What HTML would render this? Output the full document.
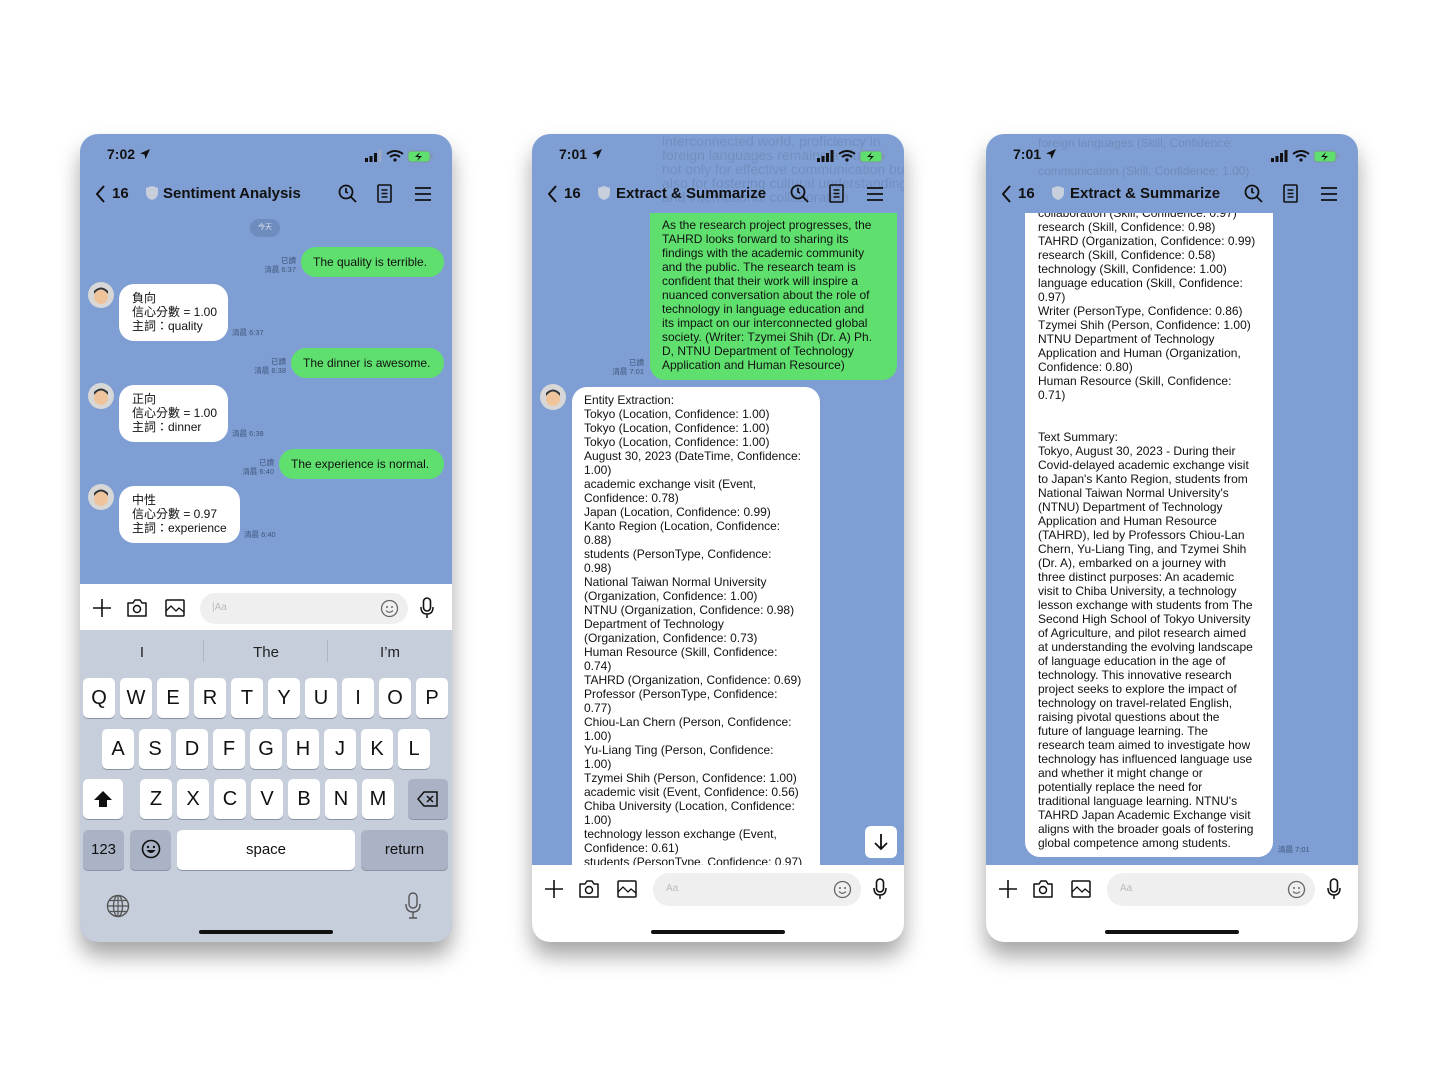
<!DOCTYPE html>
<html><head><meta charset="utf-8"><style>
*{margin:0;padding:0;box-sizing:border-box}
body{width:1434px;height:1074px;background:#fff;position:relative;overflow:hidden;font-family:"Liberation Sans","Noto Sans CJK TC",sans-serif;color:#111}
.ph{position:absolute;top:134px;width:372px;height:808px;border-radius:18px;overflow:hidden;background:#7f9fd4;box-shadow:0 14px 22px rgba(0,0,0,.35)}
.ab{position:absolute}
.time{left:27px;top:12px;font-size:14px;font-weight:bold;color:#111}
.hdr{left:0;top:48px;width:100%;height:24px;font-size:15px;font-weight:bold;color:#111}
.g{background:#5fe06e;border-radius:15px;font-size:12px;color:#111}
.w{background:#fff;border-radius:15px;font-size:12px;color:#111}
.ts{font-size:7.5px;color:#40557a;text-align:right;line-height:9px}
.av{width:26px;height:26px;border-radius:50%;background:#d7d7d7;overflow:hidden}
.bar{left:0;width:100%;height:50px;background:#fff}
.fld{background:#efefef;border-radius:16px;height:30px}
.key{position:absolute;background:#fff;border-radius:5px;box-shadow:0 1px 0 #8a93a3;font-size:20px;text-align:center;line-height:40px;color:#111}
.dk{background:#a9b3c5}
.lines{line-height:14px;white-space:pre}
</style></head><body>

<!-- PHONE 1 -->
<div class="ph" style="left:80px">
 <div class="ab time">7:02 <svg width="12" height="12" viewBox="0 0 12 12" style="vertical-align:-1px"><path d="M11 1 L1 5.5 L5.5 6.5 L6.5 11 Z" fill="#111"/></svg></div>
 <svg class="ab" style="left:285px;top:15px" width="70" height="14" viewBox="0 0 70 14">
  <rect x="0" y="9" width="3" height="4" fill="#111"/><rect x="4.5" y="7" width="3" height="6" fill="#111"/><rect x="9" y="4" width="3" height="9" fill="#111"/><rect x="13.5" y="1" width="3" height="12" fill="#9aaac4"/>
  <path d="M22 5 Q30 -1 38 5 M25 8 Q30 4 35 8" stroke="#111" stroke-width="2" fill="none"/><circle cx="30" cy="11" r="1.6" fill="#111"/>
  <rect x="43" y="2" width="22" height="11" rx="3" fill="#5fe06e" stroke="#8290a8"/><rect x="66" y="5.5" width="1.5" height="4" fill="#8290a8"/><path d="M55 3 L50 8 L54 8 L52 12 L57 7 L53 7 Z" fill="#111"/>
 </svg>
 <div class="ab hdr">
  <svg class="ab" style="left:16px;top:3px" width="10" height="18"><path d="M8 1 L1 9 L8 17" stroke="#111" stroke-width="2" fill="none"/></svg>
  <span class="ab" style="left:32px;top:3px">16</span>
  <svg class="ab" style="left:66px;top:4px" width="12" height="14"><path d="M6 0 L12 2 L12 7 Q12 12 6 14 Q0 12 0 7 L0 2 Z" fill="#c7cfdc"/></svg>
  <span class="ab" style="left:83px;top:3px">Sentiment Analysis</span>
  <svg class="ab" style="left:258px;top:2px" width="20" height="20"><circle cx="8" cy="8" r="6.5" stroke="#111" stroke-width="1.8" fill="none"/><path d="M13 13 L18 18 M8 4 L8 8 L10 9" stroke="#111" stroke-width="1.8" fill="none"/></svg>
  <svg class="ab" style="left:297px;top:2px" width="16" height="20"><rect x="1" y="1" width="13" height="17" rx="1" stroke="#111" stroke-width="1.6" fill="none"/><path d="M4.5 6h6M4.5 9.5h6M4.5 13h6" stroke="#111" stroke-width="1.4"/></svg>
  <svg class="ab" style="left:334px;top:4px" width="18" height="16"><path d="M1 2h16M1 8h16M1 14h16" stroke="#111" stroke-width="1.8"/></svg>
 </div>
 <div class="ab" style="left:170px;top:85px;width:30px;height:18px;border-radius:9px;background:#6f8cbe;color:#dfe6f2;font-size:7px;text-align:center;line-height:18px">今天</div>

 <div class="ab ts" style="left:160px;top:122px;width:56px">已讀<br>清晨 6:37</div>
 <div class="ab g" style="left:221px;top:113px;width:143px;height:30px;line-height:30px;padding-left:12px">The quality is terrible.</div>
 <div class="ab av" style="left:8px;top:148px"><svg width="26" height="26"><circle cx="13" cy="15" r="7" fill="#f0c49a"/><path d="M6 12 Q13 3 20 12 L20 9 Q13 2 6 9Z" fill="#333"/></svg></div>
 <div class="ab w lines" style="left:39px;top:150px;width:109px;height:57px;padding:7px 0 0 13px">負向
信心分數 = 1.00
主詞：quality</div>
 <div class="ab ts" style="left:152px;top:194px;text-align:left">清晨 6:37</div>

 <div class="ab ts" style="left:150px;top:223px;width:56px">已讀<br>清晨 6:38</div>
 <div class="ab g" style="left:211px;top:214px;width:153px;height:30px;line-height:30px;padding-left:12px">The dinner is awesome.</div>
 <div class="ab av" style="left:8px;top:249px"><svg width="26" height="26"><circle cx="13" cy="15" r="7" fill="#f0c49a"/><path d="M6 12 Q13 3 20 12 L20 9 Q13 2 6 9Z" fill="#333"/></svg></div>
 <div class="ab w lines" style="left:39px;top:251px;width:109px;height:57px;padding:7px 0 0 13px">正向
信心分數 = 1.00
主詞：dinner</div>
 <div class="ab ts" style="left:152px;top:295px;text-align:left">清晨 6:38</div>

 <div class="ab ts" style="left:138px;top:324px;width:56px">已讀<br>清晨 6:40</div>
 <div class="ab g" style="left:199px;top:315px;width:165px;height:30px;line-height:30px;padding-left:12px">The experience is normal.</div>
 <div class="ab av" style="left:8px;top:350px"><svg width="26" height="26"><circle cx="13" cy="15" r="7" fill="#f0c49a"/><path d="M6 12 Q13 3 20 12 L20 9 Q13 2 6 9Z" fill="#333"/></svg></div>
 <div class="ab w lines" style="left:39px;top:352px;width:121px;height:57px;padding:7px 0 0 13px">中性
信心分數 = 0.97
主詞：experience</div>
 <div class="ab ts" style="left:164px;top:396px;text-align:left">清晨 6:40</div>

 <div class="ab bar" style="top:450px;height:46px">
  <svg class="ab" style="left:12px;top:14px" width="20" height="20"><path d="M10 1v18M1 10h18" stroke="#111" stroke-width="1.6"/></svg>
  <svg class="ab" style="left:46px;top:14px" width="22" height="20"><path d="M2 5h5l2-3h5l2 3h4v13H2Z" stroke="#111" stroke-width="1.5" fill="none" stroke-linejoin="round"/><circle cx="11" cy="11" r="3.5" stroke="#111" stroke-width="1.5" fill="none"/></svg>
  <svg class="ab" style="left:84px;top:14px" width="22" height="20"><rect x="2" y="2" width="18" height="16" rx="1" stroke="#111" stroke-width="1.5" fill="none"/><path d="M2 13 L7 8 L12 13 L15 10 L20 14" stroke="#111" stroke-width="1.3" fill="none"/></svg>
  <div class="ab fld" style="left:120px;top:9px;width:208px;height:31px"><span class="ab" style="left:12px;top:9px;font-size:10px;color:#bbb">|Aa</span>
   <svg class="ab" style="left:180px;top:6px" width="19" height="19"><circle cx="9.5" cy="9.5" r="8" stroke="#666" stroke-width="1.3" fill="none"/><circle cx="7" cy="8" r="1" fill="#666"/><circle cx="12" cy="8" r="1" fill="#666"/><path d="M6 11.5 Q9.5 15 13 11.5" stroke="#666" stroke-width="1.2" fill="none"/></svg></div>
  <svg class="ab" style="left:339px;top:13px" width="16" height="22"><rect x="4.5" y="1" width="7" height="13" rx="3.5" stroke="#111" stroke-width="1.6" fill="none"/><path d="M2 10 Q2 17 8 17 Q14 17 14 10 M8 17v4" stroke="#111" stroke-width="1.5" fill="none"/></svg>
 </div>
 <div class="ab" style="left:0;top:496px;width:372px;height:312px;background:#c6cedc">
  <div class="ab" style="left:0;top:14px;width:124px;text-align:center;font-size:15px;color:#222">I</div>
  <div class="ab" style="left:123px;top:10px;width:1px;height:22px;background:#adb6c6"></div>
  <div class="ab" style="left:124px;top:14px;width:124px;text-align:center;font-size:15px;color:#222">The</div>
  <div class="ab" style="left:247px;top:10px;width:1px;height:22px;background:#adb6c6"></div>
  <div class="ab" style="left:248px;top:14px;width:124px;text-align:center;font-size:15px;color:#222">I’m</div>
 </div>
 <div class="key" style="left:3px;top:544px;width:32px">Q</div><div class="key" style="left:40px;top:544px;width:32px">W</div><div class="key" style="left:77px;top:544px;width:32px">E</div><div class="key" style="left:114px;top:544px;width:32px">R</div><div class="key" style="left:151px;top:544px;width:32px">T</div><div class="key" style="left:188px;top:544px;width:32px">Y</div><div class="key" style="left:225px;top:544px;width:32px">U</div><div class="key" style="left:262px;top:544px;width:32px">I</div><div class="key" style="left:299px;top:544px;width:32px">O</div><div class="key" style="left:336px;top:544px;width:32px">P</div>
 <div class="key" style="left:22px;top:595px;width:32px">A</div><div class="key" style="left:59px;top:595px;width:32px">S</div><div class="key" style="left:96px;top:595px;width:32px">D</div><div class="key" style="left:133px;top:595px;width:32px">F</div><div class="key" style="left:170px;top:595px;width:32px">G</div><div class="key" style="left:207px;top:595px;width:32px">H</div><div class="key" style="left:244px;top:595px;width:32px">J</div><div class="key" style="left:281px;top:595px;width:32px">K</div><div class="key" style="left:318px;top:595px;width:32px">L</div>
 <div class="key" style="left:3px;top:645px;width:40px"><svg width="20" height="18" style="vertical-align:-3px"><path d="M10 1 L19 10 L14 10 L14 17 L6 17 L6 10 L1 10 Z" fill="#111"/></svg></div>
 <div class="key" style="left:60px;top:645px;width:32px">Z</div><div class="key" style="left:97px;top:645px;width:32px">X</div><div class="key" style="left:134px;top:645px;width:32px">C</div><div class="key" style="left:171px;top:645px;width:32px">V</div><div class="key" style="left:208px;top:645px;width:32px">B</div><div class="key" style="left:245px;top:645px;width:32px">N</div><div class="key" style="left:282px;top:645px;width:32px">M</div>
 <div class="key dk" style="left:328px;top:645px;width:40px"><svg width="22" height="16" style="vertical-align:-2px"><path d="M7 1 H20 V15 H7 L1 8 Z" stroke="#111" stroke-width="1.5" fill="none"/><path d="M10 5 L16 11 M16 5 L10 11" stroke="#111" stroke-width="1.5"/></svg></div>
 <div class="key dk" style="left:3px;top:696px;width:41px;font-size:15px">123</div>
 <div class="key dk" style="left:50px;top:696px;width:41px"><svg width="20" height="20" style="vertical-align:-3px"><circle cx="10" cy="10" r="8.5" stroke="#111" stroke-width="1.6" fill="none"/><circle cx="7" cy="8" r="1.2" fill="#111"/><circle cx="13" cy="8" r="1.2" fill="#111"/><path d="M5.5 11 Q10 17 14.5 11 Z" fill="#111"/></svg></div>
 <div class="key" style="left:97px;top:696px;width:178px;font-size:15px">space</div>
 <div class="key dk" style="left:281px;top:696px;width:87px;font-size:15px">return</div>
 <svg class="ab" style="left:26px;top:760px" width="24" height="24"><circle cx="12" cy="12" r="10.5" stroke="#555" stroke-width="1.4" fill="none"/><ellipse cx="12" cy="12" rx="4.5" ry="10.5" stroke="#555" stroke-width="1.3" fill="none"/><path d="M1.5 12h21M3.5 6.5h17M3.5 17.5h17M12 1.5v21" stroke="#555" stroke-width="1.2"/></svg>
 <svg class="ab" style="left:324px;top:758px" width="18" height="28"><rect x="5" y="1" width="8" height="15" rx="4" stroke="#555" stroke-width="1.4" fill="none"/><path d="M2 12 Q2 20 9 20 Q16 20 16 12 M9 20v6 M5 26h8" stroke="#555" stroke-width="1.4" fill="none"/></svg>
 <div class="ab" style="left:119px;top:796px;width:134px;height:4px;border-radius:2px;background:#111"></div>
</div>

<!-- PHONE 2 -->
<div class="ph" style="left:532px">
 <div class="ab lines" style="left:130px;top:0px;font-size:14px;line-height:14px;color:#000;opacity:.1">interconnected world, proficiency in
foreign languages remains a vital
not only for effective communication but
also for fostering cultural understanding
and international collaboration</div>
 <div class="ab" style="left:40px;top:253px;width:248px;height:520px;background:#fff;border-radius:15px 15px 0 0"></div>
 <div class="ab lines" style="left:52px;top:259px;font-size:12px;height:472px;overflow:hidden">Entity Extraction:
Tokyo (Location, Confidence: 1.00)
Tokyo (Location, Confidence: 1.00)
Tokyo (Location, Confidence: 1.00)
August 30, 2023 (DateTime, Confidence:
1.00)
academic exchange visit (Event,
Confidence: 0.78)
Japan (Location, Confidence: 0.99)
Kanto Region (Location, Confidence:
0.88)
students (PersonType, Confidence:
0.98)
National Taiwan Normal University
(Organization, Confidence: 1.00)
NTNU (Organization, Confidence: 0.98)
Department of Technology
(Organization, Confidence: 0.73)
Human Resource (Skill, Confidence:
0.74)
TAHRD (Organization, Confidence: 0.69)
Professor (PersonType, Confidence:
0.77)
Chiou-Lan Chern (Person, Confidence:
1.00)
Yu-Liang Ting (Person, Confidence:
1.00)
Tzymei Shih (Person, Confidence: 1.00)
academic visit (Event, Confidence: 0.56)
Chiba University (Location, Confidence:
1.00)
technology lesson exchange (Event,
Confidence: 0.61)
students (PersonType, Confidence: 0.97)</div>
 <div class="ab av" style="left:8px;top:250px"><svg width="26" height="26"><circle cx="13" cy="15" r="7" fill="#f0c49a"/><path d="M6 12 Q13 3 20 12 L20 9 Q13 2 6 9Z" fill="#333"/></svg></div>
 <div class="ab time">7:01 <svg width="12" height="12" viewBox="0 0 12 12" style="vertical-align:-1px"><path d="M11 1 L1 5.5 L5.5 6.5 L6.5 11 Z" fill="#111"/></svg></div>
 <svg class="ab" style="left:285px;top:15px" width="70" height="14" viewBox="0 0 70 14">
  <rect x="0" y="9" width="3" height="4" fill="#111"/><rect x="4.5" y="7" width="3" height="6" fill="#111"/><rect x="9" y="4" width="3" height="9" fill="#111"/><rect x="13.5" y="1" width="3" height="12" fill="#111"/>
  <path d="M22 5 Q30 -1 38 5 M25 8 Q30 4 35 8" stroke="#111" stroke-width="2" fill="none"/><circle cx="30" cy="11" r="1.6" fill="#111"/>
  <rect x="43" y="2" width="22" height="11" rx="3" fill="#5fe06e" stroke="#8290a8"/><rect x="66" y="5.5" width="1.5" height="4" fill="#8290a8"/><path d="M55 3 L50 8 L54 8 L52 12 L57 7 L53 7 Z" fill="#111"/>
 </svg>
 <div class="ab hdr">
  <svg class="ab" style="left:16px;top:3px" width="10" height="18"><path d="M8 1 L1 9 L8 17" stroke="#111" stroke-width="2" fill="none"/></svg>
  <span class="ab" style="left:32px;top:3px">16</span>
  <svg class="ab" style="left:66px;top:4px" width="12" height="14"><path d="M6 0 L12 2 L12 7 Q12 12 6 14 Q0 12 0 7 L0 2 Z" fill="#c7cfdc"/></svg>
  <span class="ab" style="left:84px;top:3px">Extract &amp; Summarize</span>
  <svg class="ab" style="left:258px;top:2px" width="20" height="20"><circle cx="8" cy="8" r="6.5" stroke="#111" stroke-width="1.8" fill="none"/><path d="M13 13 L18 18 M8 4 L8 8 L10 9" stroke="#111" stroke-width="1.8" fill="none"/></svg>
  <svg class="ab" style="left:297px;top:2px" width="16" height="20"><rect x="1" y="1" width="13" height="17" rx="1" stroke="#111" stroke-width="1.6" fill="none"/><path d="M4.5 6h6M4.5 9.5h6M4.5 13h6" stroke="#111" stroke-width="1.4"/></svg>
  <svg class="ab" style="left:334px;top:4px" width="18" height="16"><path d="M1 2h16M1 8h16M1 14h16" stroke="#111" stroke-width="1.8"/></svg>
 </div>
 <div class="ab g lines" style="left:118px;top:79px;width:247px;height:167px;border-radius:0 0 15px 15px;padding:5px 0 0 12px">As the research project progresses, the
TAHRD looks forward to sharing its
findings with the academic community
and the public. The research team is
confident that their work will inspire a
nuanced conversation about the role of
technology in language education and
its impact on our interconnected global
society. (Writer: Tzymei Shih (Dr. A) Ph.
D, NTNU Department of Technology
Application and Human Resource)</div>
 <div class="ab ts" style="left:70px;top:224px;width:42px">已讀<br>清晨 7:01</div>
 <div class="ab" style="left:333px;top:692px;width:32px;height:32px;background:#fff;border-radius:6px"><svg width="32" height="32"><path d="M16 8v15 M10 17 L16 23 L22 17" stroke="#111" stroke-width="1.8" fill="none"/></svg></div>
 <div class="ab bar" style="top:731px;height:77px">
  <svg class="ab" style="left:12px;top:14px" width="20" height="20"><path d="M10 1v18M1 10h18" stroke="#111" stroke-width="1.6"/></svg>
  <svg class="ab" style="left:46px;top:14px" width="22" height="20"><path d="M2 5h5l2-3h5l2 3h4v13H2Z" stroke="#111" stroke-width="1.5" fill="none" stroke-linejoin="round"/><circle cx="11" cy="11" r="3.5" stroke="#111" stroke-width="1.5" fill="none"/></svg>
  <svg class="ab" style="left:84px;top:14px" width="22" height="20"><rect x="2" y="2" width="18" height="16" rx="1" stroke="#111" stroke-width="1.5" fill="none"/><path d="M2 13 L7 8 L12 13 L15 10 L20 14" stroke="#111" stroke-width="1.3" fill="none"/></svg>
  <div class="ab fld" style="left:121px;top:8px;width:208px;height:33px"><span class="ab" style="left:13px;top:10px;font-size:10px;color:#bbb">Aa</span>
   <svg class="ab" style="left:180px;top:7px" width="19" height="19"><circle cx="9.5" cy="9.5" r="8" stroke="#666" stroke-width="1.3" fill="none"/><circle cx="7" cy="8" r="1" fill="#666"/><circle cx="12" cy="8" r="1" fill="#666"/><path d="M6 11.5 Q9.5 15 13 11.5" stroke="#666" stroke-width="1.2" fill="none"/></svg></div>
  <svg class="ab" style="left:340px;top:13px" width="16" height="22"><rect x="4.5" y="1" width="7" height="13" rx="3.5" stroke="#111" stroke-width="1.6" fill="none"/><path d="M2 10 Q2 17 8 17 Q14 17 14 10 M8 17v4" stroke="#111" stroke-width="1.5" fill="none"/></svg>
  <div class="ab" style="left:119px;top:65px;width:134px;height:4px;border-radius:2px;background:#111"></div>
 </div>
</div>

<!-- PHONE 3 -->
<div class="ph" style="left:986px">
 <div class="ab lines" style="left:52px;top:2px;font-size:12px;line-height:14px;color:#000;opacity:.12">foreign languages (Skill, Confidence:

communication (Skill, Confidence: 1.00)</div>
 <div class="ab" style="left:0;top:79px;width:372px;height:652px;overflow:hidden">
  <div class="ab w lines" style="left:39px;top:-59px;width:248px;height:703px;padding:10px 0 0 13px;line-height:14px">foreign languages (Skill, Confidence:
1.00)
communication (Skill, Confidence: 1.00)
collaboration (Skill, Confidence: 0.97)
research (Skill, Confidence: 0.98)
TAHRD (Organization, Confidence: 0.99)
research (Skill, Confidence: 0.58)
technology (Skill, Confidence: 1.00)
language education (Skill, Confidence:
0.97)
Writer (PersonType, Confidence: 0.86)
Tzymei Shih (Person, Confidence: 1.00)
NTNU Department of Technology
Application and Human (Organization,
Confidence: 0.80)
Human Resource (Skill, Confidence:
0.71)


Text Summary:
Tokyo, August 30, 2023 - During their
Covid-delayed academic exchange visit
to Japan's Kanto Region, students from
National Taiwan Normal University's
(NTNU) Department of Technology
Application and Human Resource
(TAHRD), led by Professors Chiou-Lan
Chern, Yu-Liang Ting, and Tzymei Shih
(Dr. A), embarked on a journey with
three distinct purposes: An academic
visit to Chiba University, a technology
lesson exchange with students from The
Second High School of Tokyo University
of Agriculture, and pilot research aimed
at understanding the evolving landscape
of language education in the age of
technology. This innovative research
project seeks to explore the impact of
technology on travel-related English,
raising pivotal questions about the
future of language learning. The
research team aimed to investigate how
technology has influenced language use
and whether it might change or
potentially replace the need for
traditional language learning. NTNU's
TAHRD Japan Academic Exchange visit
aligns with the broader goals of fostering
global competence among students.</div>
 </div>
 <div class="ab ts" style="left:292px;top:711px;text-align:left">清晨 7:01</div>
 <div class="ab time">7:01 <svg width="12" height="12" viewBox="0 0 12 12" style="vertical-align:-1px"><path d="M11 1 L1 5.5 L5.5 6.5 L6.5 11 Z" fill="#111"/></svg></div>
 <svg class="ab" style="left:285px;top:15px" width="70" height="14" viewBox="0 0 70 14">
  <rect x="0" y="9" width="3" height="4" fill="#111"/><rect x="4.5" y="7" width="3" height="6" fill="#111"/><rect x="9" y="4" width="3" height="9" fill="#111"/><rect x="13.5" y="1" width="3" height="12" fill="#111"/>
  <path d="M22 5 Q30 -1 38 5 M25 8 Q30 4 35 8" stroke="#111" stroke-width="2" fill="none"/><circle cx="30" cy="11" r="1.6" fill="#111"/>
  <rect x="43" y="2" width="22" height="11" rx="3" fill="#5fe06e" stroke="#8290a8"/><rect x="66" y="5.5" width="1.5" height="4" fill="#8290a8"/><path d="M55 3 L50 8 L54 8 L52 12 L57 7 L53 7 Z" fill="#111"/>
 </svg>
 <div class="ab hdr">
  <svg class="ab" style="left:16px;top:3px" width="10" height="18"><path d="M8 1 L1 9 L8 17" stroke="#111" stroke-width="2" fill="none"/></svg>
  <span class="ab" style="left:32px;top:3px">16</span>
  <svg class="ab" style="left:66px;top:4px" width="12" height="14"><path d="M6 0 L12 2 L12 7 Q12 12 6 14 Q0 12 0 7 L0 2 Z" fill="#c7cfdc"/></svg>
  <span class="ab" style="left:84px;top:3px">Extract &amp; Summarize</span>
  <svg class="ab" style="left:258px;top:2px" width="20" height="20"><circle cx="8" cy="8" r="6.5" stroke="#111" stroke-width="1.8" fill="none"/><path d="M13 13 L18 18 M8 4 L8 8 L10 9" stroke="#111" stroke-width="1.8" fill="none"/></svg>
  <svg class="ab" style="left:297px;top:2px" width="16" height="20"><rect x="1" y="1" width="13" height="17" rx="1" stroke="#111" stroke-width="1.6" fill="none"/><path d="M4.5 6h6M4.5 9.5h6M4.5 13h6" stroke="#111" stroke-width="1.4"/></svg>
  <svg class="ab" style="left:334px;top:4px" width="18" height="16"><path d="M1 2h16M1 8h16M1 14h16" stroke="#111" stroke-width="1.8"/></svg>
 </div>
 <div class="ab bar" style="top:731px;height:77px">
  <svg class="ab" style="left:12px;top:14px" width="20" height="20"><path d="M10 1v18M1 10h18" stroke="#111" stroke-width="1.6"/></svg>
  <svg class="ab" style="left:46px;top:14px" width="22" height="20"><path d="M2 5h5l2-3h5l2 3h4v13H2Z" stroke="#111" stroke-width="1.5" fill="none" stroke-linejoin="round"/><circle cx="11" cy="11" r="3.5" stroke="#111" stroke-width="1.5" fill="none"/></svg>
  <svg class="ab" style="left:84px;top:14px" width="22" height="20"><rect x="2" y="2" width="18" height="16" rx="1" stroke="#111" stroke-width="1.5" fill="none"/><path d="M2 13 L7 8 L12 13 L15 10 L20 14" stroke="#111" stroke-width="1.3" fill="none"/></svg>
  <div class="ab fld" style="left:121px;top:8px;width:208px;height:33px"><span class="ab" style="left:13px;top:10px;font-size:10px;color:#bbb">Aa</span>
   <svg class="ab" style="left:180px;top:7px" width="19" height="19"><circle cx="9.5" cy="9.5" r="8" stroke="#666" stroke-width="1.3" fill="none"/><circle cx="7" cy="8" r="1" fill="#666"/><circle cx="12" cy="8" r="1" fill="#666"/><path d="M6 11.5 Q9.5 15 13 11.5" stroke="#666" stroke-width="1.2" fill="none"/></svg></div>
  <svg class="ab" style="left:340px;top:13px" width="16" height="22"><rect x="4.5" y="1" width="7" height="13" rx="3.5" stroke="#111" stroke-width="1.6" fill="none"/><path d="M2 10 Q2 17 8 17 Q14 17 14 10 M8 17v4" stroke="#111" stroke-width="1.5" fill="none"/></svg>
  <div class="ab" style="left:119px;top:65px;width:134px;height:4px;border-radius:2px;background:#111"></div>
 </div>
</div>
</body></html>
